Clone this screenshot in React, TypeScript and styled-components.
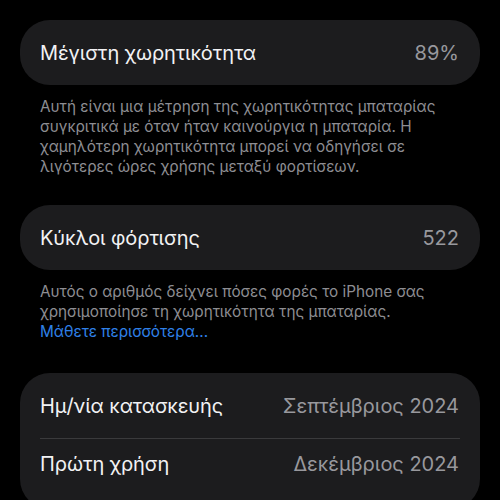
import React from 'react';
import styled, {createGlobalStyle} from 'styled-components';

const GlobalStyle = createGlobalStyle`
  html, body {
    margin: 0;
    background: #000;
    overflow: hidden;
  }
  body {
    font-family: Inter, "Noto Sans", "DejaVu Sans", sans-serif;
    -webkit-font-smoothing: antialiased;
  }
`;

type RowData = {label: string; value: string};

const Page = styled.div`
  display: flex;
  flex-direction: column;
  padding: 20px 20px 0;
  width: 460px;
  height: 500px;
`;

const Card = styled.div<{$padBottom?: number}>`
  background: #1c1c1e;
  border-radius: 30px;
  display: flex;
  flex-direction: column;
  flex-shrink: 0;
  padding-bottom: ${p => p.$padBottom ?? 0}px;
`;

const Row = styled.div<{$height: number}>`
  height: ${p => p.$height}px;
  display: flex;
  align-items: center;
  justify-content: space-between;
  padding: 0 21px 0 20px;
`;

const Divider = styled.div`
  height: 1px;
  margin: 0 20px;
  background: #3a3a3c;
`;

const Label = styled.span`
  color: #f2f2f4;
  font-size: 20px;
  letter-spacing: -0.1px;
`;

const Value = styled.span`
  color: #98989d;
  font-size: 20px;
`;

const Footer = styled.p<{$gap: number}>`
  margin: 0 0 ${p => p.$gap}px;
  padding: 12px 20px 0;
  color: #8d8d92;
  font-size: 15.3px;
  line-height: 20px;
`;

const Link = styled.a`
  color: #2f80e8;
  text-decoration: none;
`;

const SettingsCard: React.FC<{rows: RowData[]; lastRowHeight?: number; padBottom?: number}> = ({
  rows,
  lastRowHeight = 65,
  padBottom,
}) => (
  <Card $padBottom={padBottom}>
    {rows.map((r, i) => (
      <React.Fragment key={r.label}>
        {i > 0 && <Divider />}
        <Row $height={i === rows.length - 1 ? lastRowHeight : 65}>
          <Label>{r.label}</Label>
          <Value>{r.value}</Value>
        </Row>
      </React.Fragment>
    ))}
  </Card>
);

export default function App() {
  return (
    <>
      <GlobalStyle />
      <Page>
        <SettingsCard rows={[{label: 'Μέγιστη χωρητικότητα', value: '89%'}]} />
        <Footer $gap={28}>
          Αυτή είναι μια μέτρηση της χωρητικότητας μπαταρίας
          <br />
          συγκριτικά με όταν ήταν καινούργια η μπαταρία. Η
          <br />
          χαμηλότερη χωρητικότητα μπορεί να οδηγήσει σε
          <br />
          λιγότερες ώρες χρήσης μεταξύ φορτίσεων.
        </Footer>
        <SettingsCard rows={[{label: 'Κύκλοι φόρτισης', value: '522'}]} />
        <Footer $gap={31}>
          Αυτός ο αριθμός δείχνει πόσες φορές το iPhone σας
          <br />
          χρησιμοποίησε τη χωρητικότητα της μπαταρίας.
          <br />
          <Link href="#">Μάθετε περισσότερα...</Link>
        </Footer>
        <SettingsCard
          lastRowHeight={50}
          padBottom={20}
          rows={[
            {label: 'Ημ/νία κατασκευής', value: 'Σεπτέμβριος 2024'},
            {label: 'Πρώτη χρήση', value: 'Δεκέμβριος 2024'},
          ]}
        />
      </Page>
    </>
  );
}
